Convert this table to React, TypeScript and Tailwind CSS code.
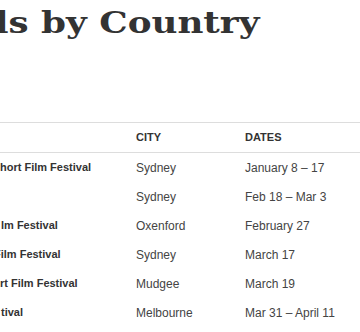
import React from "react";

const festivals = [
  { name: "hort Film Festival", city: "Sydney", dates: "January 8 – 17", shift: "" },
  { name: "", city: "Sydney", dates: "Feb 18 – Mar 3", shift: "" },
  { name: "lm Festival", city: "Oxenford", dates: "February 27", shift: "ml-px" },
  { name: "Film Festival", city: "Sydney", dates: "March 17", shift: "-ml-[6px]" },
  { name: "rt Film Festival", city: "Mudgee", dates: "March 19", shift: "" },
  { name: "tival", city: "Melbourne", dates: "Mar 31 – April 11", shift: "ml-px" },
];

export default function App() {
  return (
    <div className="w-[360px] h-[332px] overflow-hidden bg-white font-['Liberation_Sans',Arial,sans-serif]">
      {/* Page heading (cropped on the left) */}
      <h1 className="pt-[8px] -ml-[5px] origin-left scale-x-[1.19] text-[30px] leading-[30px] font-bold whitespace-nowrap text-[#333] font-['DejaVu_Serif',serif]">
        ls by Country
      </h1>

      {/* Table */}
      <div className="mt-[84px]">
        <div className="grid grid-cols-[136px_109px_1fr] h-[31px] items-center border-y border-[#ddd] text-[11px] font-bold uppercase text-[#333]">
          <div />
          <div>City</div>
          <div>Dates</div>
        </div>
        {festivals.map((f, i) => (
          <div
            key={i}
            className="grid grid-cols-[136px_109px_1fr] h-[29px] items-center text-[12px] text-[#444] whitespace-nowrap"
          >
            <div className="overflow-hidden">
              <div className={`text-[11px] font-bold text-[#333] ${f.shift}`}>{f.name}</div>
            </div>
            <div>{f.city}</div>
            <div>{f.dates}</div>
          </div>
        ))}
      </div>
    </div>
  );
}
